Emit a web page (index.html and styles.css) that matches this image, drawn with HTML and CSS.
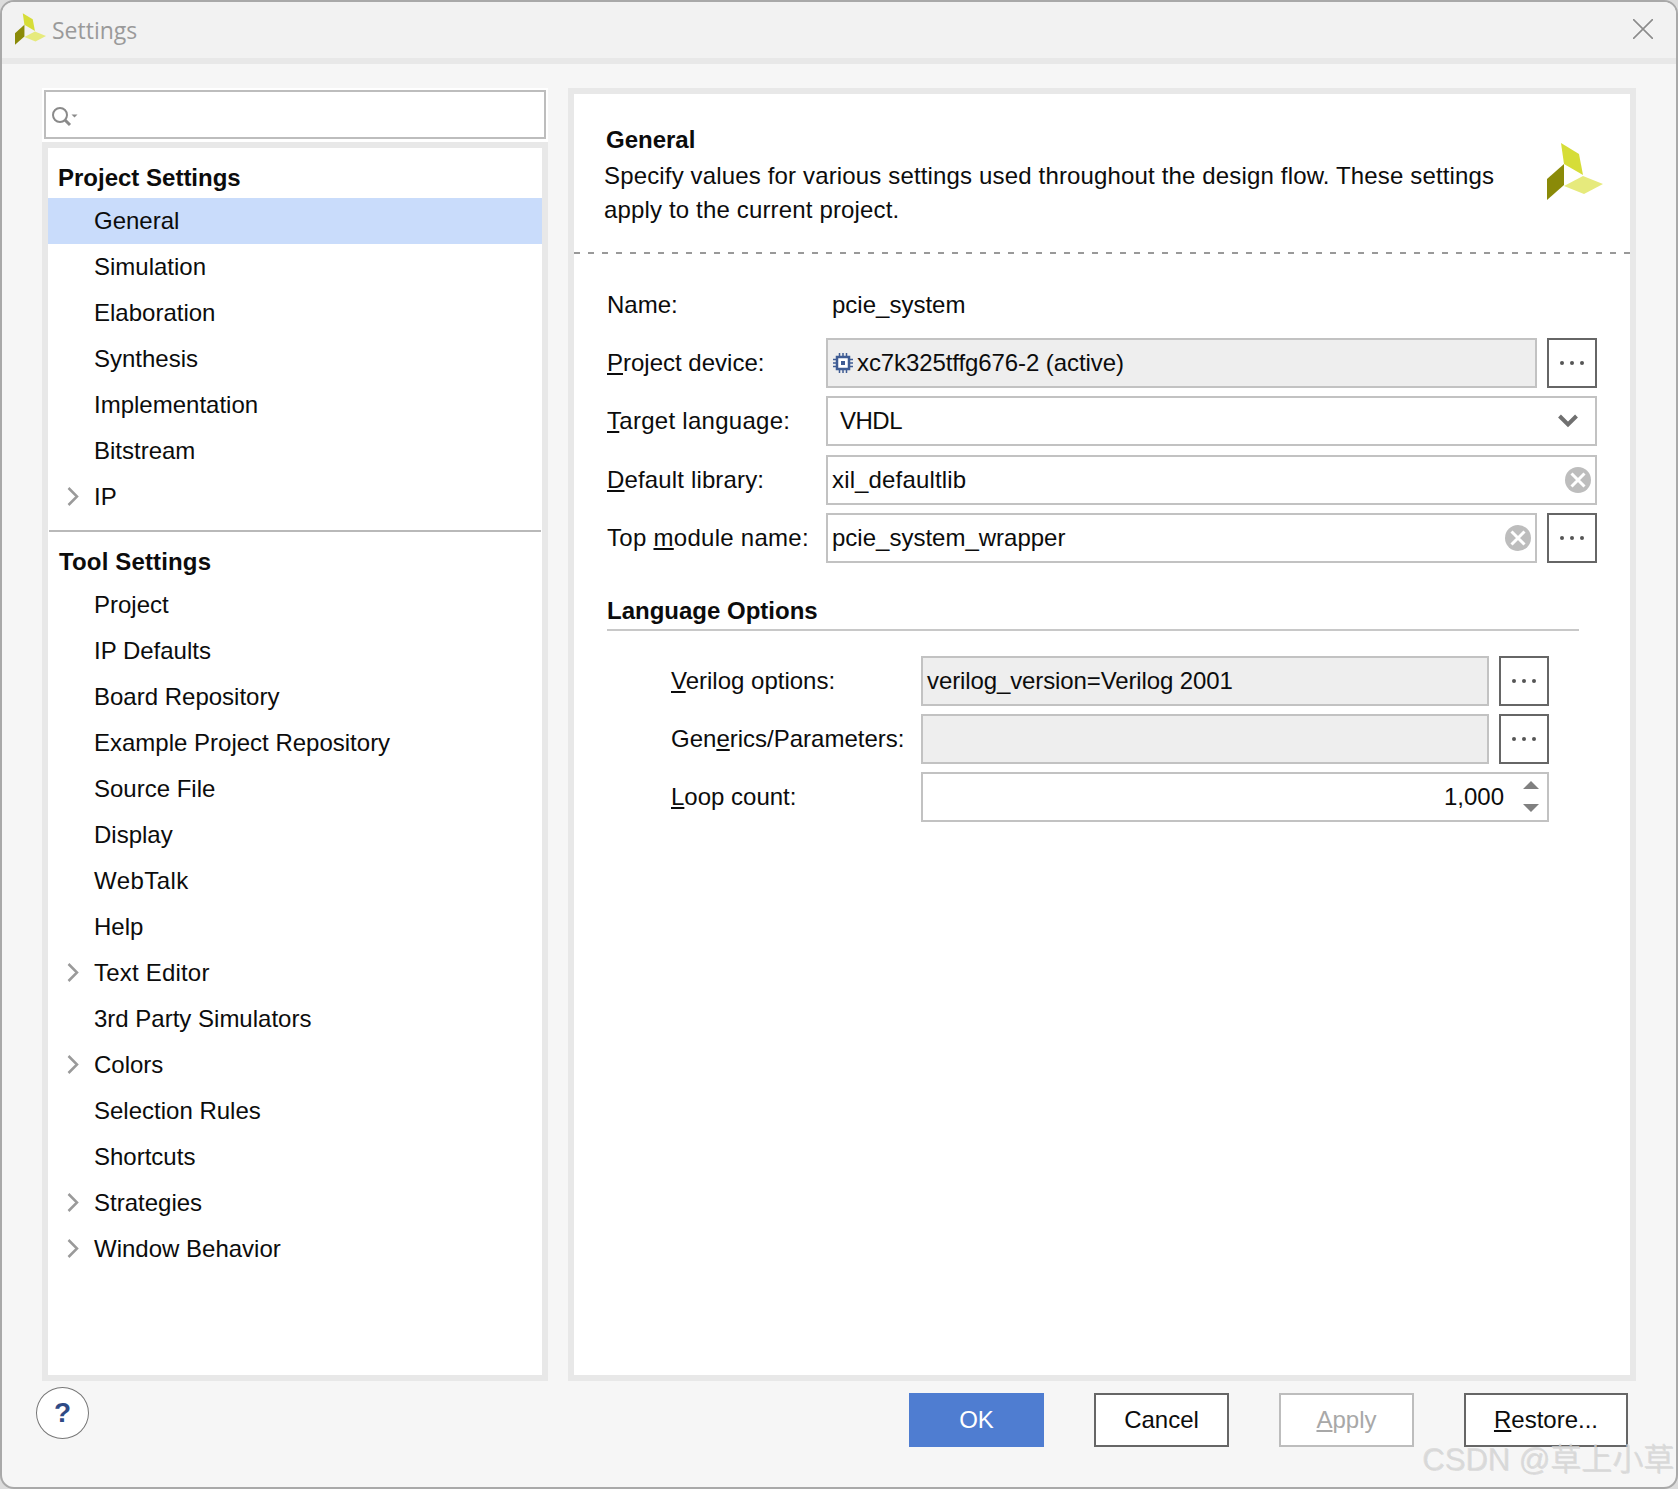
FILE: index.html
```html
<!DOCTYPE html>
<html lang="en">
<head>
<meta charset="utf-8">
<title>Settings</title>
<link rel="stylesheet" href="styles.css">
</head>
<body>
<div class="window">
  <header class="titlebar">
    <svg class="title-logo" viewBox="1547 143 56 57"><polygon fill="#d6dd38" points="1561,143 1579,154 1583,175 1564,164"/><polygon fill="#8a8a08" points="1564,164 1564,185 1547,200 1547,179"/><polygon fill="#e6ea7c" points="1583,176 1603,184 1584,194 1564,186"/></svg>
    <span class="title-text">Settings</span>
    <svg class="close" viewBox="0 0 20 20"><path d="M0 0L20 20M20 0L0 20" stroke="#8c8c8c" stroke-width="1.6" fill="none"/></svg>
  </header>
  <main class="main">
    <aside class="left">
      <div class="search-wrap">
        <div class="search">
          <svg class="search-icon" width="28" height="20" viewBox="0 0 28 20"><circle cx="8" cy="8" r="7" fill="none" stroke="#8a8a8a" stroke-width="2"/><path d="M13 13L18 18" stroke="#8a8a8a" stroke-width="3"/><path d="M19.500 7.500h6l-3 3z" fill="#8a8a8a"/></svg>
        </div>
      </div>
      <nav class="tree">
        <div class="tree-head">Project Settings</div>
        <div class="row selected"><span class="arrow"></span>General</div>
        <div class="row"><span class="arrow"></span>Simulation</div>
        <div class="row"><span class="arrow"></span>Elaboration</div>
        <div class="row"><span class="arrow"></span>Synthesis</div>
        <div class="row"><span class="arrow"></span>Implementation</div>
        <div class="row"><span class="arrow"></span>Bitstream</div>
        <div class="row"><span class="arrow"><svg width="12" height="20" viewBox="0 0 12 20"><path d="M1.500 1L10 9.500L1.500 18" fill="none" stroke="#9a9a9a" stroke-width="2.500"/></svg></span>IP</div>
        <div class="sep"></div>
        <div class="tree-head tool">Tool Settings</div>
        <div class="row"><span class="arrow"></span>Project</div>
        <div class="row"><span class="arrow"></span>IP Defaults</div>
        <div class="row"><span class="arrow"></span>Board Repository</div>
        <div class="row"><span class="arrow"></span>Example Project Repository</div>
        <div class="row"><span class="arrow"></span>Source File</div>
        <div class="row"><span class="arrow"></span>Display</div>
        <div class="row spaced-lg"><span class="arrow"></span>WebTalk</div>
        <div class="row"><span class="arrow"></span>Help</div>
        <div class="row spaced"><span class="arrow"><svg width="12" height="20" viewBox="0 0 12 20"><path d="M1.500 1L10 9.500L1.500 18" fill="none" stroke="#9a9a9a" stroke-width="2.500"/></svg></span>Text Editor</div>
        <div class="row"><span class="arrow"></span>3rd Party Simulators</div>
        <div class="row"><span class="arrow"><svg width="12" height="20" viewBox="0 0 12 20"><path d="M1.500 1L10 9.500L1.500 18" fill="none" stroke="#9a9a9a" stroke-width="2.500"/></svg></span>Colors</div>
        <div class="row"><span class="arrow"></span>Selection Rules</div>
        <div class="row"><span class="arrow"></span>Shortcuts</div>
        <div class="row"><span class="arrow"><svg width="12" height="20" viewBox="0 0 12 20"><path d="M1.500 1L10 9.500L1.500 18" fill="none" stroke="#9a9a9a" stroke-width="2.500"/></svg></span>Strategies</div>
        <div class="row"><span class="arrow"><svg width="12" height="20" viewBox="0 0 12 20"><path d="M1.500 1L10 9.500L1.500 18" fill="none" stroke="#9a9a9a" stroke-width="2.500"/></svg></span>Window Behavior</div>
      </nav>
    </aside>
    <section class="panel">
      <div class="panel-head">
        <div class="panel-copy">
          <div class="panel-title">General</div>
          <div class="panel-desc">Specify values for various settings used throughout the design flow. These settings<br>apply to the current project.</div>
        </div>
        <svg class="panel-logo" viewBox="1547 143 56 57"><polygon fill="#d6dd38" points="1561,143 1579,154 1583,175 1564,164"/><polygon fill="#8a8a08" points="1564,164 1564,185 1547,200 1547,179"/><polygon fill="#e6ea7c" points="1583,176 1603,184 1584,194 1564,186"/></svg>
      </div>
      <div class="form">
        <div class="name-row"><span class="label">Name:</span><span class="name-value">pcie_system</span></div>
        <div class="f-row">
          <span class="label"><u>P</u>roject device:</span>
          <div class="field ro"><svg class="chip" width="20" height="20" viewBox="0 0 20 20"><rect x="4" y="4" width="12" height="12" fill="#fff" stroke="#3f5c94" stroke-width="2.500"/><rect x="8" y="8" width="4" height="4" fill="#3f5c94"/><path d="M6.500 0v3M10 0v3M13.500 0v3M6.500 17v3M10 17v3M13.500 17v3M0 6.500h3M0 10h3M0 13.500h3M17 6.500h3M17 10h3M17 13.500h3" stroke="#3f5c94" stroke-width="1.500"/></svg><span class="chip-text">xc7k325tffg676-2 (active)</span></div>
          <div class="dots"><i></i><i></i><i></i></div>
        </div>
        <div class="f-row">
          <span class="label spaced-label"><u>T</u>arget language:</span>
          <div class="field combo"><span class="vhdl">VHDL</span><svg width="20" height="14" viewBox="0 0 20 14"><path d="M1.500 2L10 10.500L18.500 2" fill="none" stroke="#707070" stroke-width="4"/></svg></div>
        </div>
        <div class="f-row">
          <span class="label spaced-label-sm"><u>D</u>efault library:</span>
          <div class="field clear"><span class="lib">xil_defaultlib</span><svg width="26" height="26" viewBox="0 0 26 26"><circle cx="13" cy="13" r="13" fill="#bdbdbd"/><path d="M6.500 6.500L19.500 19.500M19.500 6.500L6.500 19.500" stroke="#fff" stroke-width="3"/></svg></div>
        </div>
        <div class="f-row">
          <span class="label spaced-label">Top <u>m</u>odule name:</span>
          <div class="field clear"><span>pcie_system_wrapper</span><svg width="26" height="26" viewBox="0 0 26 26"><circle cx="13" cy="13" r="13" fill="#bdbdbd"/><path d="M6.500 6.500L19.500 19.500M19.500 6.500L6.500 19.500" stroke="#fff" stroke-width="3"/></svg></div>
          <div class="dots"><i></i><i></i><i></i></div>
        </div>
        <div class="section">Language Options</div>
        <div class="sub">
          <div class="s-row">
            <span class="label wide"><u>V</u>erilog options:</span>
            <div class="field ro"><span class="tight">verilog_version=Verilog 2001</span></div>
            <div class="dots"><i></i><i></i><i></i></div>
          </div>
          <div class="s-row">
            <span class="label wide">Gen<u>e</u>rics/Parameters:</span>
            <div class="field ro"></div>
            <div class="dots"><i></i><i></i><i></i></div>
          </div>
          <div class="s-row">
            <span class="label wide"><u>L</u>oop count:</span>
            <div class="field spin"><span>1,000</span><svg width="16" height="31" viewBox="0 0 16 31"><path d="M8 0L16 8H0zM0 23H16L8 31z" fill="#808080"/></svg></div>
          </div>
        </div>
      </div>
    </section>
  </main>
  <footer class="footer">
    <div class="help">?</div>
    <div class="buttons">
      <button class="btn primary">OK</button>
      <button class="btn">Cancel</button>
      <button class="btn disabled"><u>A</u>pply</button>
      <button class="btn restore"><u>R</u>estore...</button>
    </div>
  </footer>
  <div class="watermark">CSDN @草上小草</div>
</div>
</body>
</html>
```
FILE: styles.css
```css
* { box-sizing: border-box; }
html, body { margin: 0; height: 1489px; overflow: hidden; }
body {
  background: #dcdcdc;
  font-family: "Liberation Sans", Arial, sans-serif;
  font-size: 24px;
  color: #0c0c0c;
}
.window {
  position: relative;
  width: 1678px;
  height: 1489px;
  border: 2px solid #a9a9a9;
  border-radius: 14px;
  background: #f6f6f6;
  display: flex;
  flex-direction: column;
  overflow: hidden;
}
.titlebar {
  height: 62px;
  flex: none;
  background: #f2f2f2;
  border-bottom: 6px solid #e8e8e8;
  display: flex;
  align-items: center;
  padding: 0 23px 0 13px;
}
.title-logo { width: 31px; height: 32px; margin-top: -2px; }
.title-text {
  font-family: "Open Sans", sans-serif;
  font-size: 23px;
  color: #9a9a9a;
  margin-left: 6px;
}
.close { width: 20px; height: 20px; margin-left: auto; margin-top: -3px; }
.main {
  flex: 1;
  min-height: 0;
  display: flex;
  gap: 20px;
  padding: 24px 40px 0;
}
.left { width: 506px; display: flex; flex-direction: column; }
.search-wrap { height: 54px; padding: 2px 2px 3px; background: #fff; flex: none; }
.search {
  height: 100%;
  border: 2px solid #bdbdbd;
  background: #fff;
  display: flex;
  align-items: center;
  padding: 4px 0 0 6px;
}
.tree {
  flex: 1;
  border: 6px solid #e8e8e8;
  background: #fff;
  overflow: hidden;
}
.tree-head {
  font-weight: 700;
  height: 40px;
  margin-top: 10px;
  line-height: 40px;
  padding-left: 10px;
}
.tree-head.tool { padding-left: 11px; letter-spacing: .15px; }
.row {
  height: 46px;
  display: flex;
  align-items: center;
  padding-left: 19px;
  white-space: nowrap;
}
.row.selected { background: #c9dcfb; }
.row.spaced { letter-spacing: .2px; }
.row.spaced-lg { letter-spacing: .45px; }
.arrow { width: 27px; flex: none; display: flex; align-items: center; }
.sep { height: 2px; background: #b9b9b9; margin: 10px 1px 0; }
.panel {
  flex: 1;
  min-width: 0;
  border: 6px solid #e8e8e8;
  background: #fff;
}
.panel-head {
  height: 160px;
  background: repeating-linear-gradient(90deg, #999 0 6px, transparent 6px 14px) left bottom / 100% 2px no-repeat;
  padding: 29px 27px 0 30px;
  display: flex;
  justify-content: space-between;
}
.panel-title { font-weight: 700; line-height: 34px; padding-left: 2px; }
.panel-desc { line-height: 34px; margin-top: 2px; letter-spacing: .155px; }
.panel-logo { width: 56px; height: 57px; margin-top: 20px; }
.form { padding: 34px 33px 0; }
.name-row { height: 34px; display: flex; align-items: center; margin-bottom: 16px; }
.name-value { margin-left: 6px; }
.label { width: 219px; flex: none; white-space: nowrap; }
.label.wide { width: 250px; }
.spaced-label { letter-spacing: .28px; }
.spaced-label-sm { letter-spacing: .15px; }
.f-row, .s-row { height: 50px; display: flex; align-items: center; margin-bottom: 8.300px; }
.field {
  flex: 1;
  min-width: 0;
  height: 100%;
  border: 2px solid #c2c2c2;
  background: #fff;
  display: flex;
  align-items: center;
  padding: 0 4px;
  white-space: nowrap;
}
.field.ro { background: #eee; }
.chip { flex: none; margin-left: 1px; }
.chip-text { margin-left: 4px; letter-spacing: -.09px; }
.tight { letter-spacing: -.11px; }
.vhdl { letter-spacing: -.5px; }
.lib { letter-spacing: .15px; }
.field.combo { padding: 0 17px 0 12px; justify-content: space-between; }
.field.clear { padding-right: 4px; justify-content: space-between; }
.field.spin { justify-content: flex-end; padding-right: 8px; }
.field.spin span { margin-right: 19px; }
.dots {
  width: 50px;
  height: 100%;
  flex: none;
  margin-left: 10px;
  border: 2px solid #666;
  background: #fff;
  display: flex;
  align-items: center;
  justify-content: center;
  gap: 6px;
}
.dots i { width: 4px; height: 4px; border-radius: 50%; background: #555; }
.section {
  font-weight: 700;
  height: 36px;
  line-height: 32px;
  border-bottom: 2px solid #c8c8c8;
  margin: 32px 18px 25px 0;
}
.sub { padding-left: 64px; margin-right: 48px; }
.s-row { margin-bottom: 8px; }
.footer {
  height: 106px;
  flex: none;
  display: flex;
  align-items: flex-start;
  padding: 12px 48px 0 34px;
}
.help {
  width: 53px;
  height: 52px;
  margin-top: -6px;
  border: 1px solid #777;
  border-radius: 50%;
  background: #fff;
  color: #2f4a85;
  font-weight: 700;
  font-size: 28px;
  display: flex;
  align-items: center;
  justify-content: center;
}
.buttons { margin-left: auto; display: flex; gap: 50px; }
.btn {
  width: 135px;
  height: 54px;
  border: 2px solid #666;
  background: #fff;
  font: inherit;
  color: #0c0c0c;
  padding: 0;
}
.btn.primary { background: #4f7dd1; border-color: #4f7dd1; color: #fff; }
.btn.disabled { border-color: #bdbdbd; color: #a8a8a8; }
.btn.restore { width: 164px; }
.watermark {
  position: absolute;
  right: 2px;
  bottom: 8px;
  font-family: "Liberation Sans", "Noto Sans CJK SC", sans-serif;
  font-size: 31px;
  color: rgba(215, 215, 215, .8);
  text-shadow: 1px 1px 0 rgba(0, 0, 0, .1);
  white-space: nowrap;
  pointer-events: none;
}
```
